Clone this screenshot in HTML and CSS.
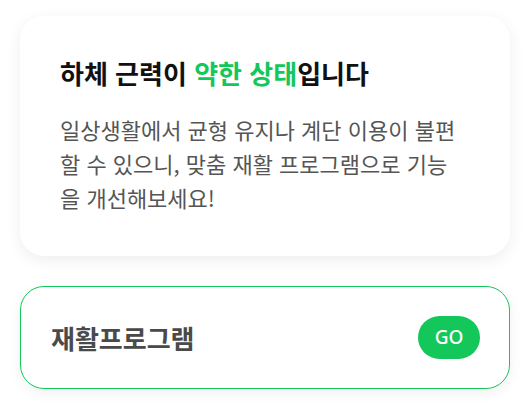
FILE: index.html
```html
<!DOCTYPE html>
<html lang="ko">
<head>
    <meta charset="UTF-8">
    <meta name="viewport" content="width=device-width, initial-scale=1.0">
    <title>하체 근력 결과</title>
    <link rel="stylesheet" href="styles.css">
</head>
<body>
    <!-- 결과 카드 -->
    <div class="result-card">
        <h1 class="result-title">하체 근력이 <span class="accent">약한 상태</span>입니다</h1>
        <p class="result-desc">일상생활에서 균형 유지나 계단 이용이 불편할 수 있으니, 맞춤 재활 프로그램으로 기능을 개선해보세요!</p>
    </div>

    <!-- 재활 프로그램 링크 -->
    <div class="program-card">
        <span class="program-name">재활프로그램</span>
        <button class="go-button">GO</button>
    </div>
</body>
</html>
```

FILE: styles.css
```css
/* 기본 스타일 */
body {
    font-family: "Noto Sans CJK KR", "Noto Sans", sans-serif;
    margin: 0;
    padding: 16px 20px;
    background: #fff;
}

.result-card {
    background: #fff;
    border-radius: 24px;
    padding: 38px 46px 42px 40px;
    box-shadow: 0 4px 16px rgba(0, 0, 0, 0.07);
}

.result-title {
    font-size: 26px;
    font-weight: bold;
    color: #111;
    margin: 0 0 20px;
    line-height: 1.45;
}

.accent {
    color: #13c75b;
}

.result-desc {
    font-size: 22px;
    color: #555;
    line-height: 34px;
    margin: 0;
    word-break: break-all;
}

.program-card {
    margin-top: 30px;
    display: flex;
    align-items: center;
    justify-content: space-between;
    height: 101px;
    padding: 0 29px 0 30px;
    border: 1px solid #13c75b;
    border-radius: 24px;
    box-shadow: 0 4px 14px rgba(0, 0, 0, 0.06);
}

.program-name {
    font-size: 26px;
    font-weight: bold;
    color: #4a4a4a;
}

.go-button {
    background: #13c75b;
    color: #fff;
    font-family: "Noto Sans", sans-serif;
    font-size: 19px;
    font-weight: 500;
    width: 62px;
    height: 43px;
    border: none;
    border-radius: 22px;
    cursor: pointer;
}
```
